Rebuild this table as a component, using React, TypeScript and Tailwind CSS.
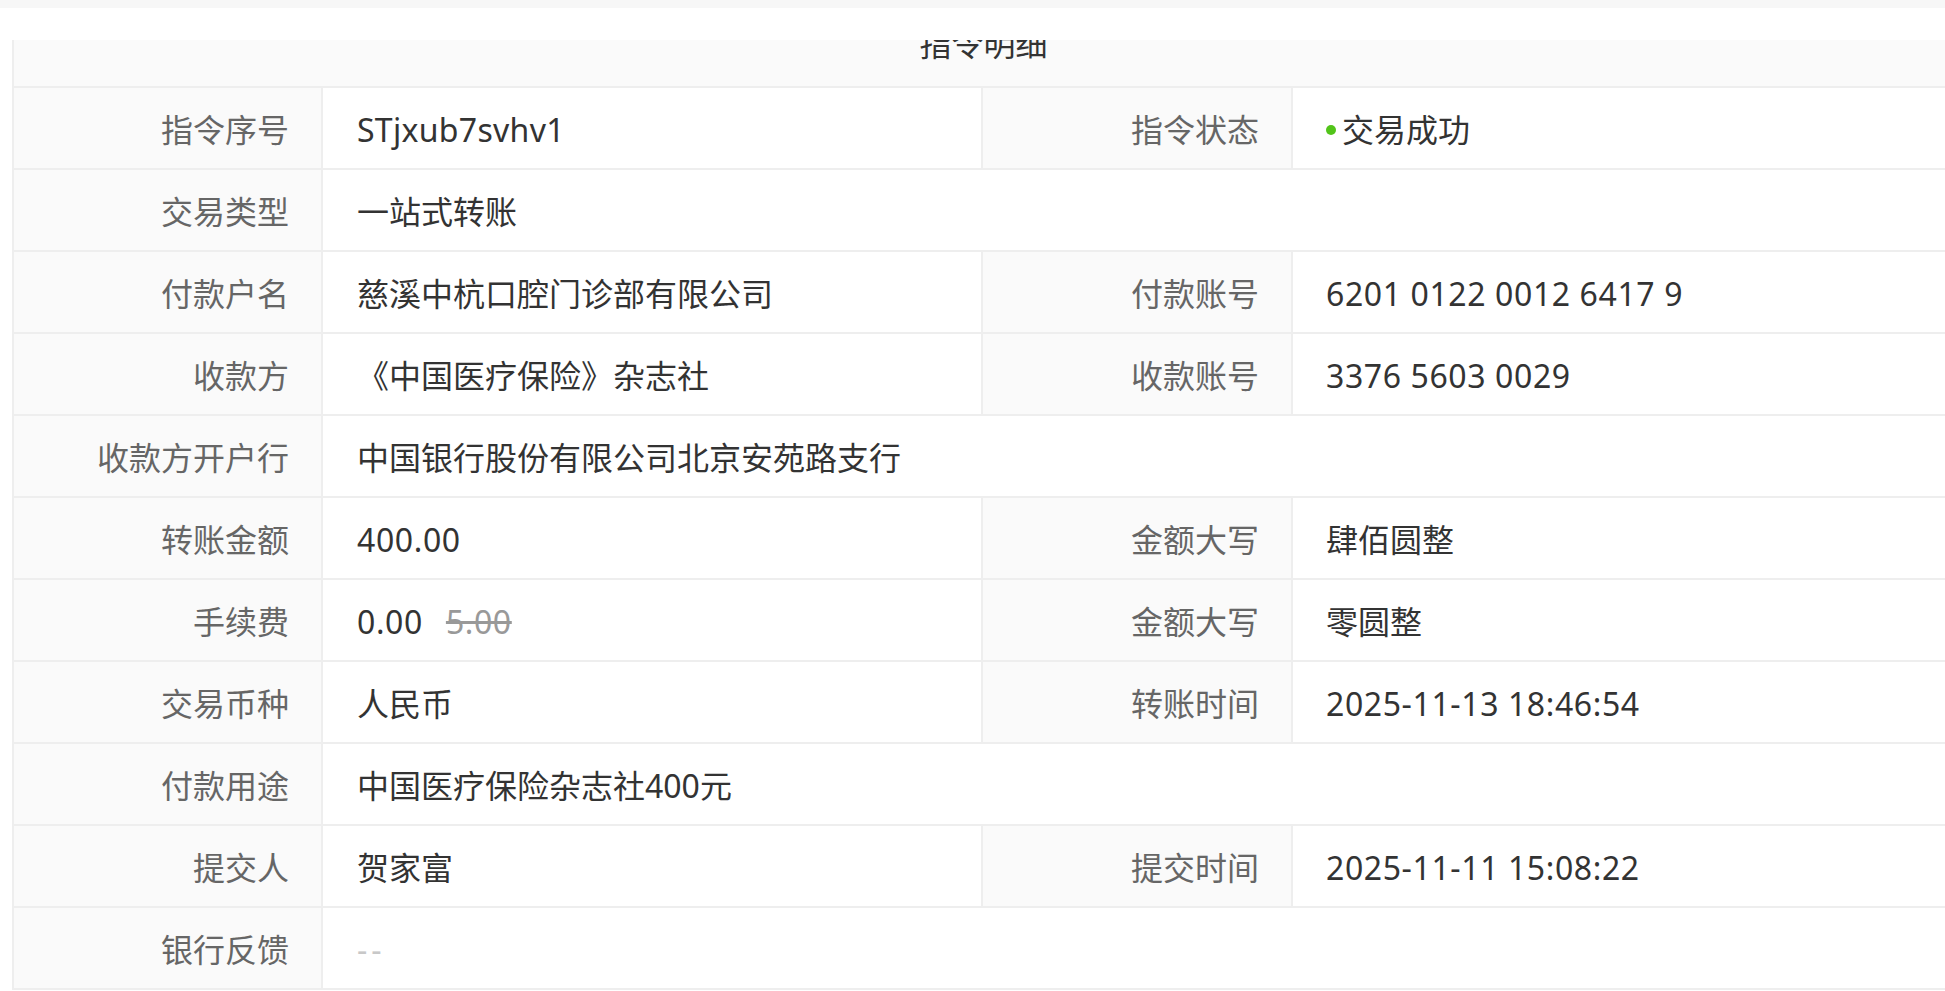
type Row =
  | { kind: "pair"; l1: string; v1: React.ReactNode; l2: string; v2: React.ReactNode }
  | { kind: "full"; l1: string; v1: React.ReactNode };

// 숫자/영문 값은 원본 폰트보다 좁아서 자간을 약간 넓힘
const Num = ({ children }: { children: React.ReactNode }) => (
  <span className="tracking-[0.6px]">{children}</span>
);

const rows: Row[] = [
  {
    kind: "pair",
    l1: "指令序号",
    v1: <span className="tracking-[0.3px]">STjxub7svhv1</span>,
    l2: "指令状态",
    v2: (
      <span className="inline-flex items-center">
        <span className="mr-[6px] inline-block h-[10px] w-[10px] rounded-full bg-[#52c41a]" />
        交易成功
      </span>
    ),
  },
  { kind: "full", l1: "交易类型", v1: "一站式转账" },
  {
    kind: "pair",
    l1: "付款户名",
    v1: "慈溪中杭口腔门诊部有限公司",
    l2: "付款账号",
    v2: <Num>6201 0122 0012 6417 9</Num>,
  },
  {
    kind: "pair",
    l1: "收款方",
    v1: "《中国医疗保险》杂志社",
    l2: "收款账号",
    v2: <Num>3376 5603 0029</Num>,
  },
  { kind: "full", l1: "收款方开户行", v1: "中国银行股份有限公司北京安苑路支行" },
  { kind: "pair", l1: "转账金额", v1: <Num>400.00</Num>, l2: "金额大写", v2: "肆佰圆整" },
  {
    kind: "pair",
    l1: "手续费",
    v1: (
      <Num>
        0.00
        <span className="ml-[23px] text-[#999] line-through">5.00</span>
      </Num>
    ),
    l2: "金额大写",
    v2: "零圆整",
  },
  {
    kind: "pair",
    l1: "交易币种",
    v1: "人民币",
    l2: "转账时间",
    v2: <Num>2025-11-13 18:46:54</Num>,
  },
  { kind: "full", l1: "付款用途", v1: "中国医疗保险杂志社400元" },
  {
    kind: "pair",
    l1: "提交人",
    v1: "贺家富",
    l2: "提交时间",
    v2: <Num>2025-11-11 15:08:22</Num>,
  },
  {
    kind: "full",
    l1: "银行反馈",
    v1: <span className="tracking-[4px] text-[#c8c8c8]">--</span>,
  },
];

function Label({ children, className }: { children: React.ReactNode; className: string }) {
  return (
    <div
      className={`flex shrink-0 items-center justify-end border-r-2 border-[#eeeeee] bg-[#fafafa] pr-[32px] pt-[3px] text-[#666666] ${className}`}
    >
      {children}
    </div>
  );
}

export default function App() {
  return (
    <div
      className="min-h-screen overflow-hidden bg-white text-[32px] leading-[48px]"
      style={{ fontFamily: '"Noto Sans", "Noto Sans CJK SC", sans-serif' }}
    >
      <div className="h-2 bg-[#f7f7f7]" />
      <div className="pl-3 pt-8">
        <div className="w-[1941px] border-l-2 border-[#eeeeee]">
          <div className="h-[48px] overflow-hidden border-b-2 border-[#eeeeee] bg-[#fafafa]">
            <div className="-mt-[20px] text-center text-[#333333]">指令明细</div>
          </div>
          {rows.map((row) => (
            <div
              key={row.l1 + (row.kind === "pair" ? row.l2 : "")}
              className="flex h-[82px] border-b-2 border-[#eeeeee] text-[#333333]"
            >
              <Label className="w-[309px]">{row.l1}</Label>
              {row.kind === "pair" ? (
                <>
                  <div className="flex w-[660px] shrink-0 items-center border-r-2 border-[#eeeeee] pl-[34px] pt-[3px]">
                    {row.v1}
                  </div>
                  <Label className="w-[310px]">{row.l2}</Label>
                  <div className="flex flex-1 items-center pl-[33px] pt-[3px]">{row.v2}</div>
                </>
              ) : (
                <div className="flex flex-1 items-center pl-[34px] pt-[3px]">{row.v1}</div>
              )}
            </div>
          ))}
        </div>
      </div>
    </div>
  );
}
